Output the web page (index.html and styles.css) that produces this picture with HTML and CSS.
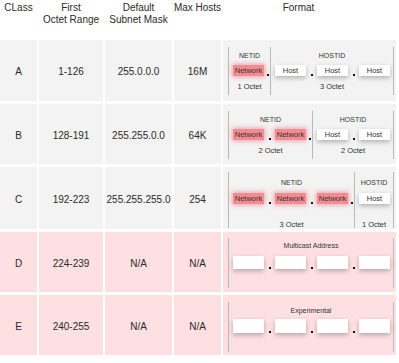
FILE: index.html
```html
<!DOCTYPE html>
<html>
<head>
<meta charset="utf-8">
<link rel="stylesheet" href="styles.css">
</head>
<body>
<div class="tbl">
  <div class="hd">CLass</div>
  <div class="hd">First<br>Octet Range</div>
  <div class="hd">Default<br>Subnet Mask</div>
  <div class="hd nowrap">Max Hosts</div>
  <div class="hd hd-fmt">Format</div>

  <div class="cell gray">A</div>
  <div class="cell gray">1-126</div>
  <div class="cell gray">255.0.0.0</div>
  <div class="cell gray">16M</div>
  <div class="cell gray fcell">
    <div class="fmt fmt-a">
      <div class="grp">
        <div class="lbl">NETID</div>
        <div class="boxes"><span class="box net">Network</span><span class="dot end"><i></i></span></div>
        <div class="lbl oct">1 Octet</div>
      </div>
      <div class="grp sep">
        <div class="lbl">HOSTID</div>
        <div class="boxes"><span class="box host">Host</span><span class="dot"><i></i></span><span class="box host">Host</span><span class="dot"><i></i></span><span class="box host">Host</span></div>
        <div class="lbl oct">3 Octet</div>
      </div>
    </div>
  </div>

  <div class="cell gray">B</div>
  <div class="cell gray">128-191</div>
  <div class="cell gray">255.255.0.0</div>
  <div class="cell gray">64K</div>
  <div class="cell gray fcell">
    <div class="fmt fmt-b">
      <div class="grp">
        <div class="lbl">NETID</div>
        <div class="boxes"><span class="box net">Network</span><span class="dot"><i></i></span><span class="box net">Network</span><span class="dot end"><i></i></span></div>
        <div class="lbl oct">2 Octet</div>
      </div>
      <div class="grp sep">
        <div class="lbl">HOSTID</div>
        <div class="boxes"><span class="box host">Host</span><span class="dot"><i></i></span><span class="box host">Host</span></div>
        <div class="lbl oct">2 Octet</div>
      </div>
    </div>
  </div>

  <div class="cell gray">C</div>
  <div class="cell gray">192-223</div>
  <div class="cell gray">255.255.255.0</div>
  <div class="cell gray">254</div>
  <div class="cell gray fcell">
    <div class="fmt fmt-c">
      <div class="grp">
        <div class="lbl">NETID</div>
        <div class="boxes"><span class="box net">Network</span><span class="dot"><i></i></span><span class="box net">Network</span><span class="dot"><i></i></span><span class="box net">Network</span><span class="dot end"><i></i></span></div>
        <div class="lbl oct">3 Octet</div>
      </div>
      <div class="grp sep">
        <div class="lbl">HOSTID</div>
        <div class="boxes"><span class="box host">Host</span></div>
        <div class="lbl oct">1 Octet</div>
      </div>
    </div>
  </div>

  <div class="cell pink">D</div>
  <div class="cell pink">224-239</div>
  <div class="cell pink">N/A</div>
  <div class="cell pink">N/A</div>
  <div class="cell pink fcell">
    <div class="fmt fmt-d">
      <div class="grp">
        <div class="lbl">Multicast Address</div>
        <div class="boxes"><span class="box host empty"></span><span class="dot"><i></i></span><span class="box host empty"></span><span class="dot"><i></i></span><span class="box host empty"></span><span class="dot"><i></i></span><span class="box host empty"></span></div>
      </div>
    </div>
  </div>

  <div class="cell pink">E</div>
  <div class="cell pink">240-255</div>
  <div class="cell pink">N/A</div>
  <div class="cell pink">N/A</div>
  <div class="cell pink fcell">
    <div class="fmt fmt-e">
      <div class="grp">
        <div class="lbl">Experimental</div>
        <div class="boxes"><span class="box host empty"></span><span class="dot"><i></i></span><span class="box host empty"></span><span class="dot"><i></i></span><span class="box host empty"></span><span class="dot"><i></i></span><span class="box host empty"></span></div>
      </div>
    </div>
  </div>
</div>
</body>
</html>
```
FILE: styles.css
```css
html, body {
  margin: 0;
  padding: 0;
  background: #ffffff;
}
body {
  font-family: "Liberation Sans", Arial, sans-serif;
  color: #2a2a2a;
}
.tbl {
  display: grid;
  grid-template-columns: 37px 64px 67px 47px 173px;
  grid-template-rows: 37px 61px 60px 62px 60px 60px;
  column-gap: 2px;
  row-gap: 3px;
  width: 396px;
}
.hd {
  font-size: 10px;
  line-height: 12px;
  text-align: center;
  padding-top: 2px;
  color: #2a2a2a;
}
.nowrap {
  white-space: nowrap;
  margin: 0 -4px;
}
.hd-fmt {
  padding-right: 22px;
}
.cell {
  font-size: 10px;
  display: flex;
  align-items: center;
  justify-content: center;
  padding-top: 2px;
  box-sizing: border-box;
}
.gray { background: #f3f3f3; }
.pink { background: #fee0e2; }
.fcell {
  display: block;
  padding: 0;
}
.fmt {
  display: flex;
  margin: 7px 2px 0 5px;
  border-left: 1px solid #b9b9b9;
  border-right: 1px solid #b9b9b9;
  box-sizing: border-box;
  height: 48px;
}
.grp {
  display: flex;
  flex-direction: column;
  padding-left: 4px;
}
.grp:last-child { flex: 1; }
.grp.sep {
  border-left: 1px solid #b9b9b9;
}
.lbl {
  font-size: 7px;
  line-height: 10px;
  text-align: center;
  color: #333;
  padding-right: 4px;
}
.lbl.oct { font-size: 7.5px; }
.fmt-a .lbl, .fmt-b .lbl { margin-top: 4px; }
.fmt-a .lbl.oct, .fmt-b .lbl.oct { margin-top: 6px; }
.grp .boxes { margin-top: 4px; }
.boxes {
  display: flex;
  align-items: flex-end;
}
.box {
  width: 31px;
  height: 11px;
  font-size: 7.5px;
  line-height: 11px;
  text-align: center;
  color: #333;
  flex: none;
}
.net {
  background: #f48b91;
  box-shadow: 0 0 5px 1px rgba(240, 95, 105, 0.55);
}
.host {
  background: #ffffff;
  box-shadow: 0 2px 5px rgba(0, 0, 0, 0.28);
}
.dot {
  width: 11px;
  flex: none;
  display: flex;
  justify-content: center;
}
.dot.end {
  width: 6px;
  justify-content: flex-end;
}
.dot i {
  display: block;
  width: 2px;
  height: 2px;
  background: #111;
}
.dot.end i { margin-right: 1px; }

.fmt-c {
  margin-top: 5px;
  height: 56px;
}
.fmt-c .lbl { margin-top: 6px; }
.fmt-c .boxes { margin-top: 5px; }
.fmt-c .lbl.oct { margin-top: 16px; }

.fmt-d, .fmt-e {
  margin-top: 6px;
  height: 50px;
}
.fmt-e { margin-top: 7px; }
.fmt-d .lbl { margin-top: 3px; }
.fmt-e .lbl { margin-top: 4px; }
.fmt-d .boxes { margin-top: 5px; }
.fmt-e .boxes { margin-top: 3px; }
.empty { height: 13px; }
.fmt-e .empty { height: 14px; }
```
